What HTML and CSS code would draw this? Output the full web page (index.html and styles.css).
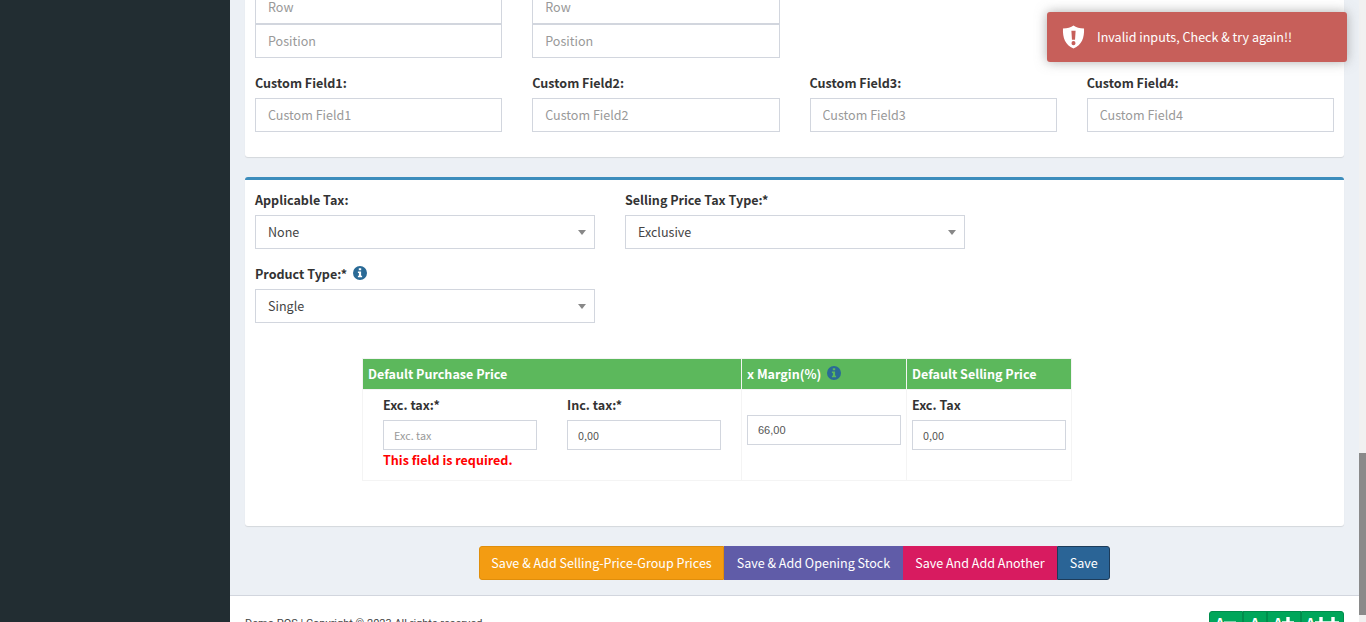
FILE: index.html
```html
<!DOCTYPE html>
<html>
  <head>
    <meta charset="utf-8">
    <link rel="stylesheet" href="styles.css">
    <title>Add new product</title>
  </head>
  <body>
    <div class="wrapper">
      <aside class="sidebar"></aside>

      <div class="main">
        <section class="box box-plain">
          <div class="grid-4 stack-row">
            <div class="field">
              <input class="input" placeholder="Row">
              <input class="input" placeholder="Position">
            </div>
            <div class="field">
              <input class="input" placeholder="Row">
              <input class="input" placeholder="Position">
            </div>
          </div>
          <div class="grid-4">
            <div class="field">
              <label>Custom Field1:</label>
              <input class="input" placeholder="Custom Field1">
            </div>
            <div class="field">
              <label>Custom Field2:</label>
              <input class="input" placeholder="Custom Field2">
            </div>
            <div class="field">
              <label>Custom Field3:</label>
              <input class="input" placeholder="Custom Field3">
            </div>
            <div class="field">
              <label>Custom Field4:</label>
              <input class="input" placeholder="Custom Field4">
            </div>
          </div>
        </section>

        <section class="box box-primary">
          <div class="grid-3">
            <div class="field">
              <label>Applicable Tax:</label>
              <div class="select"><span>None</span><i class="arrow"></i></div>
            </div>
            <div class="field">
              <label>Selling Price Tax Type:*</label>
              <div class="select"><span>Exclusive</span><i class="arrow"></i></div>
            </div>
          </div>
          <div class="grid-3">
            <div class="field">
              <label>Product Type:*
                <svg class="info" viewBox="0 0 14 14"><path fill-rule="evenodd" d="M7 0a7 7 0 1 1 0 14A7 7 0 0 1 7 0zM5.800 2.200v2.100h2.400V2.200zM4.900 5.600v1.400h1v2.800h-1v1.400h4.200V9.800h-1V5.600z"/></svg>
              </label>
              <div class="select"><span>Single</span><i class="arrow"></i></div>
            </div>
          </div>

          <table class="price-table">
            <tr>
              <th class="col-purchase">Default Purchase Price</th>
              <th class="col-margin">x Margin(%)
                <svg class="info" viewBox="0 0 14 14"><path fill-rule="evenodd" d="M7 0a7 7 0 1 1 0 14A7 7 0 0 1 7 0zM5.800 2.200v2.100h2.400V2.200zM4.900 5.600v1.400h1v2.800h-1v1.400h4.200V9.800h-1V5.600z"/></svg>
              </th>
              <th class="col-selling">Default Selling Price</th>
            </tr>
            <tr>
              <td>
                <div class="purchase-inputs">
                  <div>
                    <label>Exc. tax:*</label>
                    <input class="input input-sm" placeholder="Exc. tax">
                    <div class="error">This field is required.</div>
                  </div>
                  <div>
                    <label>Inc. tax:*</label>
                    <input class="input input-sm" value="0,00">
                  </div>
                </div>
              </td>
              <td class="margin-cell">
                <input class="input input-sm input-arial" value="66,00">
              </td>
              <td class="selling-cell">
                <label>Exc. Tax</label>
                <input class="input input-sm" value="0,00">
              </td>
            </tr>
          </table>
        </section>

        <div class="actions">
          <button class="btn btn-orange">Save &amp; Add Selling-Price-Group Prices</button>
          <button class="btn btn-purple">Save &amp; Add Opening Stock</button>
          <button class="btn btn-pink">Save And Add Another</button>
          <button class="btn btn-blue">Save</button>
        </div>

        <footer class="footer">
          <span class="copyright">Demo POS | Copyright © 2023 All rights reserved.</span>
          <div class="font-sizes">
            <button class="fs-small">A<svg viewBox="0 0 12 12"><path d="M0 4.500h12v3.500H0z"/></svg></button>
            <button class="fs-normal">A</button>
            <button class="fs-large">A<svg viewBox="0 0 12 12"><path d="M4.300 0h3.400v4.300H12v3.400H7.700V12H4.300V7.700H0V4.300h4.300z"/></svg></button>
            <button class="fs-huge">A<svg viewBox="0 0 12 12"><path d="M4.300 0h3.400v4.300H12v3.400H7.700V12H4.300V7.700H0V4.300h4.300z"/></svg><svg viewBox="0 0 12 12"><path d="M4.300 0h3.400v4.300H12v3.400H7.700V12H4.300V7.700H0V4.300h4.300z"/></svg></button>
          </div>
        </footer>
      </div>

      <div class="scrollbar"><div class="thumb"></div></div>
    </div>

    <div class="toast">
      <svg class="toast-icon" viewBox="0 0 24 24"><path fill-rule="evenodd" d="M12 0c2.600 1.900 6.500 3.100 11 3.200 0.400 9.700-2.300 17.200-11 20.800C3.300 20.400 0.600 12.900 1 3.200 5.500 3.100 9.400 1.900 12 0zM9.800 5.500l0.600 9.300h3.200l0.600-9.300zM12 16.300a2.100 2.100 0 1 0 0 4.200 2.100 2.100 0 0 0 0-4.200z"/></svg>
      <span>Invalid inputs, Check &amp; try again!!</span>
    </div>
  </body>
</html>
```

FILE: styles.css
```css
/* page frame */
html, body {
    margin: 0;
    padding: 0;
    height: 100%;
    overflow: hidden;
}

body {
    font-family: "Noto Sans CJK SC", "Liberation Sans", sans-serif;
    font-size: 12.55px;
    line-height: 20px;
    color: #333;
    background-color: #ecf0f5;
}

.wrapper {
    display: flex;
    height: 622px;
    overflow: hidden;
}

.sidebar {
    width: 230px;
    flex: none;
    background-color: #222d32;
}

.main {
    flex: 1;
    min-width: 0;
    margin-top: -20px;
}

.scrollbar {
    width: 7px;
    flex: none;
    background-color: #f1f1f1;
    padding-top: 453px;
    box-sizing: border-box;
}

.thumb {
    height: 162px;
    background-color: #8a8a8a;
}

/* boxes */
.box {
    margin: 0 15px 20px;
    padding: 10px;
    background-color: #fff;
    border-radius: 3px;
    box-shadow: 0 1px 1px rgba(0, 0, 0, 0.1);
}

.box-plain {
    padding-bottom: 10px;
}

.box-primary {
    border-top: 3px solid #3c8dbc;
    height: 349px;
    box-sizing: border-box;
}

.grid-4 {
    display: grid;
    grid-template-columns: repeat(4, 1fr);
    column-gap: 30px;
}

.grid-3 {
    display: grid;
    grid-template-columns: repeat(3, 340px);
    column-gap: 30px;
}

.field {
    margin-bottom: 15px;
}

label {
    display: block;
    font-weight: 700;
    margin-bottom: 5px;
}

.input {
    display: block;
    width: 100%;
    height: 34px;
    box-sizing: border-box;
    padding: 5px 12px 7px;
    border: 1px solid #d2d6de;
    border-radius: 0;
    background-color: #fff;
    color: #555;
    font-family: inherit;
    font-size: 12.55px;
    outline: none;
}

.input::placeholder {
    color: #999;
}

.input-sm {
    height: 30px;
    padding: 5px 10px;
    font-size: 10.8px;
}

.input-arial {
    font-family: "Liberation Sans", sans-serif;
    font-size: 11px;
}

.select {
    position: relative;
    height: 34px;
    box-sizing: border-box;
    padding: 6px 12px;
    border: 1px solid #d2d6de;
    background-color: #fff;
    color: #444;
}

.arrow {
    position: absolute;
    right: 8px;
    top: 14px;
    border-style: solid;
    border-width: 5px 4px 0;
    border-color: #888 transparent transparent;
}

.info {
    width: 14px;
    height: 14px;
    margin-left: 3px;
    fill: #2a6a96;
    vertical-align: -1px;
}

/* price table */
.price-table {
    width: 710px;
    margin: 20px 0 0 107px;
    border-collapse: collapse;
    table-layout: fixed;
}

.price-table th {
    height: 31px;
    padding: 0 5px;
    box-sizing: border-box;
    background-color: #5cb85c;
    color: #fff;
    text-align: left;
    border: 1px solid #f4f4f4;
}

.price-table td {
    height: 91px;
    padding: 5px;
    box-sizing: border-box;
    border: 1px solid #f4f4f4;
    vertical-align: top;
}

.col-purchase {
    width: 379px;
}

.col-margin,
.col-selling {
    width: 165px;
}

.purchase-inputs {
    display: grid;
    grid-template-columns: 154px 154px;
    column-gap: 30px;
    padding-left: 15px;
}

.price-table td.margin-cell {
    padding: 25px 5px 0;
}

.error {
    color: #f00;
    font-weight: 700;
}

/* action buttons */
.actions {
    display: flex;
    justify-content: center;
    margin: 0 15px;
    padding-bottom: 15px;
}

.btn {
    height: 34px;
    padding: 0 11.5px 2px;
    border: 1px solid transparent;
    color: #fff;
    font-family: inherit;
    font-size: 12.55px;
}

.btn-orange {
    background-color: #f39c12;
    border-color: #e08e0b;
    border-radius: 3px 0 0 3px;
}

.btn-purple {
    background-color: #605ca8;
    border-color: #605ca8;
}

.btn-pink {
    background-color: #d81b60;
    border-color: #d81b60;
}

.btn-blue {
    background-color: #2a6496;
    border-color: #1d3c5a;
    border-radius: 0 3px 3px 0;
}

/* footer */
.footer {
    display: flex;
    justify-content: space-between;
    align-items: flex-start;
    padding: 15px 15px 0;
    height: 100px;
    box-sizing: border-box;
    background-color: #fff;
    border-top: 1px solid #d2d6de;
}

.copyright {
    font-family: Roboto, sans-serif;
    font-size: 11px;
    padding-top: 3px;
    color: #444;
}

.font-sizes {
    display: flex;
}

.font-sizes button {
    display: flex;
    justify-content: center;
    align-items: flex-start;
    height: 34px;
    padding: 1px 0 0;
    border: 1px solid #008d4c;
    background-color: #00a65a;
    color: #fff;
    font-family: inherit;
    font-size: 14px;
    font-weight: 700;
}

.font-sizes button:first-child {
    border-radius: 3px 0 0 3px;
}

.font-sizes button:last-child {
    border-radius: 0 3px 3px 0;
}

.font-sizes svg {
    width: 12px;
    height: 12px;
    margin-top: 4px;
    fill: #fff;
}

.fs-small,
.fs-large {
    width: 34px;
}

.fs-normal {
    width: 24px;
}

.fs-huge {
    width: 43px;
}

/* toast sits over the page */
.toast {
    position: absolute;
    top: 12px;
    left: 1047px;
    width: 300px;
    height: 50px;
    box-sizing: border-box;
    padding-left: 15px;
    display: flex;
    align-items: center;
    gap: 12px;
    background-color: #c75f5a;
    border-radius: 3px;
    box-shadow: 0 0 12px rgba(153, 153, 153, 0.8);
    color: #fff;
}

.toast-icon {
    width: 23px;
    height: 24px;
    fill: #fff;
}
```
